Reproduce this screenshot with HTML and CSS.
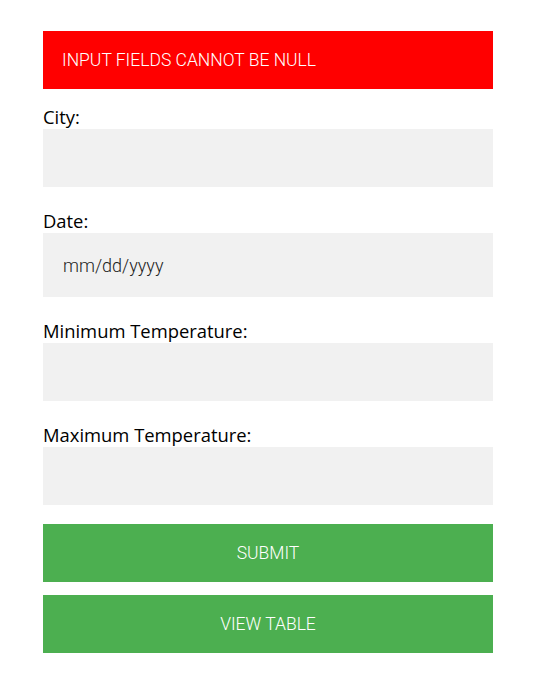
FILE: index.html
```html
<!DOCTYPE html>
<html lang="en">
<head>
<meta charset="utf-8">
<title>Weather Form</title>
<link rel="stylesheet" href="styles.css">
</head>
<body>
<div class="container">
  <div class="alert">INPUT FIELDS CANNOT BE NULL</div>
  <form class="form">
    <label class="label label-first" for="city">City:</label>
    <input class="field" type="text" id="city">
    <label class="label" for="date">Date:</label>
    <div class="field field-date" id="date">mm/dd/yyyy</div>
    <label class="label" for="tmin">Minimum Temperature:</label>
    <input class="field" type="text" id="tmin">
    <label class="label" for="tmax">Maximum Temperature:</label>
    <input class="field" type="text" id="tmax">
    <button class="btn btn-submit" type="button">SUBMIT</button>
    <button class="btn btn-view" type="button">VIEW TABLE</button>
  </form>
</div>
</body>
</html>
```

FILE: styles.css
```css
html, body {
  margin: 0;
  padding: 0;
  background: #ffffff;
}

.container {
  width: 450px;
  margin: 31px 0 0 43px;
}

.alert {
  height: 58px;
  box-sizing: border-box;
  padding: 0 19px;
  display: flex;
  align-items: center;
  background: #ff0000;
  color: #ffffff;
  font-family: Roboto, "Liberation Sans", sans-serif;
  font-weight: 300;
  font-size: 17.5px;
}

.form {
  display: flex;
  flex-direction: column;
}

.label {
  font-family: "Open Sans", "Noto Sans", sans-serif;
  font-size: 18.4px;
  line-height: 24px;
  color: #000000;
  margin-top: 22px;
}

.label-first {
  margin-top: 16px;
}

.field {
  display: block;
  width: 100%;
  height: 58px;
  box-sizing: border-box;
  margin: 0;
  border: none;
  outline: none;
  background: #f1f1f1;
  padding: 0 20px;
  font-family: Roboto, "Liberation Sans", sans-serif;
  font-size: 18px;
}

.field-date {
  height: 64px;
  display: flex;
  align-items: center;
  color: #222222;
  font-weight: 300;
}

.btn {
  display: flex;
  align-items: center;
  justify-content: center;
  width: 100%;
  height: 58px;
  border: none;
  margin: 0;
  padding: 0;
  background: #4caf50;
  color: #ffffff;
  font-family: Roboto, "Liberation Sans", sans-serif;
  font-weight: 300;
  font-size: 17.5px;
}

.btn-submit {
  margin-top: 19px;
}

.btn-view {
  margin-top: 13px;
}
```
